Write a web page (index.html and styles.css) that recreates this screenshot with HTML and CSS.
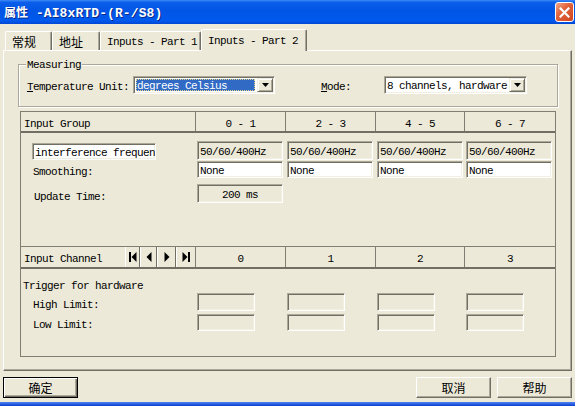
FILE: index.html
```html
<!DOCTYPE html>
<html>
<head>
<meta charset="utf-8">
<title>属性</title>
<link rel="stylesheet" href="styles.css">
</head>
<body>
<div class="titlebar">
  <div class="title"><span class="cjk">属性</span> -AI8xRTD-(R-/S8)</div>
  <div class="close"><svg width="11" height="11" viewBox="0 0 11 11"><path d="M1.5 1.5 L9.5 9.5 M9.5 1.5 L1.5 9.5" stroke="#fff" stroke-width="2.2" stroke-linecap="square"/></svg></div>
</div>

<div class="tabs">
  <div class="tab t1"><span class="cjk">常规</span></div>
  <div class="tab t2"><span class="cjk">地址</span></div>
  <div class="tab t3">Inputs - Part 1</div>
  <div class="tab t4 active">Inputs - Part 2</div>
</div>

<div class="panel">
  <div class="group">
    <div class="legend">Measuring</div>
    <div class="group-row">
      <span class="label lbl-temp"><u>T</u>emperature Unit:</span>
      <div class="combo combo-temp">
        <span class="combo-text selected">degrees Celsius</span>
        <span class="drop"><svg width="7" height="4" viewBox="0 0 7 4"><path d="M0 0 H7 L3.5 4 Z" fill="#000"/></svg></span>
      </div>
      <span class="label lbl-mode"><u>M</u>ode:</span>
      <div class="combo combo-mode">
        <span class="combo-text">8 channels, hardware</span>
        <span class="drop"><svg width="7" height="4" viewBox="0 0 7 4"><path d="M0 0 H7 L3.5 4 Z" fill="#000"/></svg></span>
      </div>
    </div>
  </div>

  <div class="table">
    <div class="thead">
      <div class="th first"><span class="txt">Input Group</span></div>
      <div class="th"><span class="txt">0 - 1</span></div>
      <div class="th"><span class="txt">2 - 3</span></div>
      <div class="th"><span class="txt">4 - 5</span></div>
      <div class="th"><span class="txt">6 - 7</span></div>
    </div>

    <div class="tbody body1">
      <div class="row r-freq">
        <div class="cell"><div class="field white freq">interference frequen</div></div>
        <div class="cell"><div class="field disabled">50/60/400Hz</div></div>
        <div class="cell"><div class="field disabled">50/60/400Hz</div></div>
        <div class="cell"><div class="field disabled">50/60/400Hz</div></div>
        <div class="cell"><div class="field disabled">50/60/400Hz</div></div>
      </div>
      <div class="row r-smooth">
        <div class="cell rowlabel">Smoothing:</div>
        <div class="cell"><div class="field white">None</div></div>
        <div class="cell"><div class="field white">None</div></div>
        <div class="cell"><div class="field white">None</div></div>
        <div class="cell"><div class="field white">None</div></div>
      </div>
      <div class="row r-update">
        <div class="cell rowlabel upd">Update Time:</div>
        <div class="cell"><div class="field disabled center">200 ms</div></div>
      </div>
    </div>

    <div class="thead thead2">
      <div class="th first">
        <span class="txt">Input Channel</span>
        <div class="nav">
          <span class="navbtn n1"><svg width="8" height="10" viewBox="0 0 8 10"><rect x="0" y="0" width="2" height="10" fill="#000"/><path d="M7.5 0 L2.5 5 L7.5 10 Z" fill="#000"/></svg></span>
          <span class="navbtn n2"><svg width="6" height="10" viewBox="0 0 6 10"><path d="M5.5 0 L0.5 5 L5.5 10 Z" fill="#000"/></svg></span>
          <span class="navbtn n3"><svg width="6" height="10" viewBox="0 0 6 10"><path d="M0.5 0 L5.5 5 L0.5 10 Z" fill="#000"/></svg></span>
          <span class="navbtn n4"><svg width="8" height="10" viewBox="0 0 8 10"><path d="M0.5 0 L5.5 5 L0.5 10 Z" fill="#000"/><rect x="6" y="0" width="2" height="10" fill="#000"/></svg></span>
        </div>
      </div>
      <div class="th"><span class="txt">0</span></div>
      <div class="th"><span class="txt">1</span></div>
      <div class="th"><span class="txt">2</span></div>
      <div class="th"><span class="txt">3</span></div>
    </div>

    <div class="tbody body2">
      <div class="trigger">Trigger for hardware</div>
      <div class="row r-high">
        <div class="cell rowlabel">High Limit:</div>
        <div class="cell"><div class="field disabled limit"></div></div>
        <div class="cell"><div class="field disabled limit"></div></div>
        <div class="cell"><div class="field disabled limit"></div></div>
        <div class="cell"><div class="field disabled limit"></div></div>
      </div>
      <div class="row r-low">
        <div class="cell rowlabel">Low Limit:</div>
        <div class="cell"><div class="field disabled limit"></div></div>
        <div class="cell"><div class="field disabled limit"></div></div>
        <div class="cell"><div class="field disabled limit"></div></div>
        <div class="cell"><div class="field disabled limit"></div></div>
      </div>
    </div>
  </div>
</div>

<div class="buttons">
  <div class="btn default"><span class="cjk">确定</span></div>
  <div class="spacer"></div>
  <div class="btn"><span class="cjk">取消</span></div>
  <div class="btn"><span class="cjk">帮助</span></div>
</div>
<div class="bottom-edge"></div>
</body>
</html>
```

FILE: styles.css
```css
* { box-sizing: border-box; }
html, body { margin: 0; padding: 0; }
body {
  width: 575px;
  height: 406px;
  overflow: hidden;
  background: #ECE9D8;
  font-family: "Liberation Mono", "Noto Sans CJK SC", monospace;
  font-size: 11px;
  line-height: 12px;
  letter-spacing: -0.6px;
  color: #000;
  display: flex;
  flex-direction: column;
}
.cjk {
  font-family: "Noto Sans CJK SC", "Liberation Sans", sans-serif;
  font-size: 12px;
  letter-spacing: 0;
  line-height: 14px;
}

/* title bar */
.titlebar {
  flex: none;
  height: 24px;
  display: flex;
  align-items: center;
  justify-content: space-between;
  padding: 0 1px 0 4px;
  background: linear-gradient(to bottom, #3d8af7 0%, #0a5ee9 10%, #0055e5 45%, #005aee 85%, #0047d4 100%);
}
.title {
  color: #fff;
  font-weight: bold;
  font-size: 13px;
  letter-spacing: 0.1px;
  white-space: pre;
  text-shadow: 1px 1px 0 #0b2a8a;
}
.title .cjk { font-size: 12px; font-weight: bold; }
.close {
  width: 19px;
  height: 20px;
  border: 1px solid #fff;
  border-radius: 3px;
  background: linear-gradient(135deg, #f3a88a 0%, #e2643c 40%, #cf4621 100%);
  display: flex;
  align-items: center;
  justify-content: center;
}

/* tabs */
.tabs {
  flex: none;
  height: 26px;
  display: flex;
  align-items: flex-end;
  padding-left: 5px;
  position: relative;
  z-index: 1;
}
.tab {
  height: 19px;
  padding: 2px 0 0 6px;
  display: flex;
  align-items: center;
  white-space: pre;
  border-top: 1px solid #fff;
  border-left: 1px solid #fff;
  border-right: 1px solid #716f64;
  box-shadow: inset -1px 0 #aca899;
  border-radius: 2px 2px 0 0;
  background: #ECE9D8;
}
.t1 { width: 47px; }
.t2 { width: 48px; }
.t3 { width: 101px; }
.tab.active {
  width: 106px;
  height: 22px;
  margin-bottom: -1px;
  padding-bottom: 2px;
}

/* panel */
.panel {
  flex: none;
  margin: 0 3px;
  height: 321px;
  border: 1px solid;
  border-color: #fff #716f64 #716f64 #fff;
  box-shadow: inset -1px -1px #aca899;
  padding: 13px 0 0 14px;
}

/* group box */
.group {
  position: relative;
  width: 540px;
  height: 43px;
  border: 1px solid #aca899;
  box-shadow: inset 1px 1px #fff, 1px 1px #fff;
  padding: 11px 0 0 8px;
}
.legend {
  position: absolute;
  left: 7px;
  top: -6px;
  padding: 0 1px;
  background: #ECE9D8;
}
.group-row {
  display: flex;
  align-items: center;
  height: 18px;
}
.label { white-space: pre; padding-top: 3px; }
.lbl-temp { margin-right: 4px; }
.lbl-mode { margin-left: 46px; margin-right: 33px; }

.combo {
  height: 18px;
  display: flex;
  background: #fff;
  border: 1px solid;
  border-color: #aca899 #fff #fff #aca899;
  box-shadow: inset 1px 1px #716f64, inset -1px -1px #f1efe2;
  padding: 1px;
}
.combo-temp { width: 142px; }
.combo-mode { width: 143px; }
.combo-text {
  flex: 1;
  white-space: pre;
  overflow: hidden;
  display: flex;
  align-items: center;
  padding: 2px 0 0 1px;
}
.combo-text.selected {
  margin: 1px 2px 1px 1px;
  background: #316ac5;
  color: #fff;
  outline: 1px dotted #e6d48a;
  outline-offset: -1px;
}
.drop {
  flex: none;
  width: 16px;
  display: flex;
  align-items: center;
  justify-content: center;
  background: #ECE9D8;
  border: 1px solid;
  border-color: #f1efe2 #716f64 #716f64 #f1efe2;
  box-shadow: inset 1px 1px #fff, inset -1px -1px #aca899;
}

/* table */
.table {
  margin: 4px 0 0 2px;
  width: 536px;
  height: 246px;
  border: 1px solid #807e73;
  display: flex;
  flex-direction: column;
}
.thead, .row {
  display: grid;
  grid-template-columns: 174px 90px 90px 89px 91px;
}
.thead {
  flex: none;
  height: 21px;
  border-bottom: 2px solid #716f64;
}
.thead2 {
  height: 23px;
  border-top: 1px solid #807e73;
}
.th {
  display: flex;
  align-items: center;
  justify-content: center;
  white-space: pre;
  border-left: 1px solid #807e73;
}
.th .txt { padding-top: 4px; }
.th.first {
  border-left: none;
  justify-content: flex-start;
  padding-left: 3px;
}
.nav {
  margin-left: auto;
  display: flex;
  height: 100%;
}
.navbtn {
  display: flex;
  align-items: center;
  justify-content: center;
  border-left: 1px solid #fff;
  border-right: 1px solid #716f64;
}
.n1 { width: 15px; }
.n2 { width: 17px; }
.n3 { width: 19px; }
.n4 { width: 19px; border-right: none; }

.tbody { flex: none; }
.body1 { height: 113px; padding-top: 8px; }
.body2 { height: 87px; padding-top: 11px; }

.r-freq { height: 17px; }
.r-smooth { height: 16px; margin-top: 3px; }
.r-update { height: 19px; margin-top: 7px; }
.r-high { height: 18px; margin-top: 1px; }
.r-low { height: 17px; margin-top: 3px; }

.cell { display: flex; align-items: stretch; }
.rowlabel { align-items: center; padding: 5px 0 0 12px; white-space: pre; }
.rowlabel.upd { padding: 6px 0 0 13px; }
.trigger { padding-left: 2px; height: 12px; white-space: pre; }

.field {
  width: 86px;
  margin-left: 2px;
  border: 1px solid;
  border-color: #aca899 #fff #fff #aca899;
  box-shadow: inset 1px 1px #716f64, inset -1px -1px #f1efe2;
  padding: 3px 0 0 2px;
  display: flex;
  align-items: center;
  white-space: pre;
  overflow: hidden;
}
.field.white { background: #fff; }
.field.disabled { background: #ECE9D8; }
.field.center { justify-content: center; padding-left: 0; }
.field.freq {
  width: 124px;
  margin-left: 11px;
  margin-top: 2px;
  height: 17px;
  flex: none;
}
.field.limit { width: 58px; }

/* buttons */
.buttons {
  flex: none;
  display: flex;
  gap: 6px;
  padding: 0 3px;
  margin-top: 6px;
  height: 21px;
}
.spacer { flex: 1; }
.btn {
  width: 75px;
  height: 21px;
  display: flex;
  align-items: center;
  justify-content: center;
  border: 1px solid;
  border-color: #fff #716f64 #716f64 #fff;
  box-shadow: inset -1px -1px #aca899;
}
.btn.default {
  border-color: #000;
  box-shadow: inset 1px 1px #fff, inset -1px -1px #716f64, inset -2px -2px #aca899;
}
.bottom-edge {
  flex: none;
  margin-top: 4px;
  height: 4px;
  background: linear-gradient(to bottom, #4f82ee, #0b3fd2);
}
```
